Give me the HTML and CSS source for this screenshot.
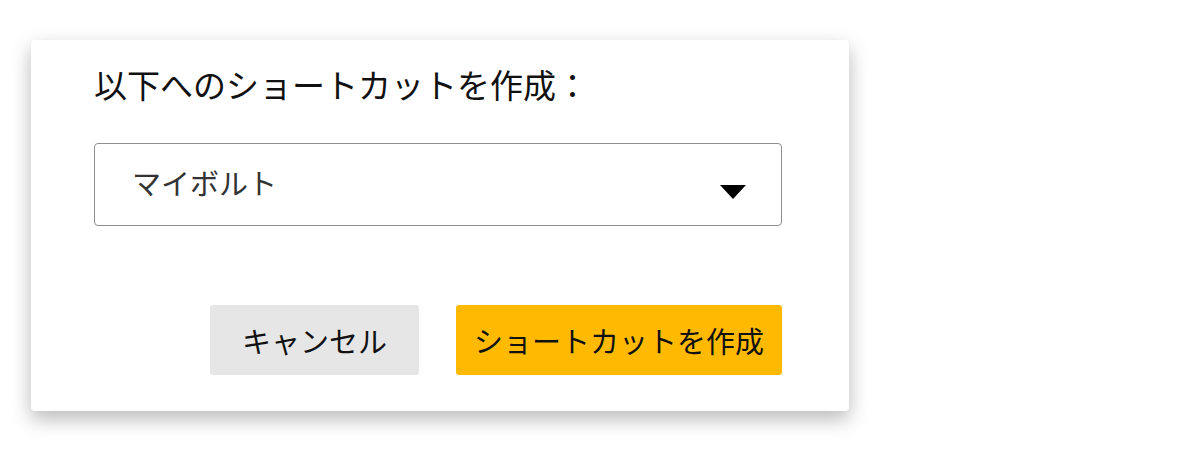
FILE: index.html
```html
<!DOCTYPE html>
<html lang="ja">
<head>
    <meta charset="UTF-8">
    <meta name="viewport" content="width=device-width, initial-scale=1.0">
    <title>ショートカットを作成</title>
    <link rel="stylesheet" href="styles.css">
</head>
<body>

    <div class="dialog">
        <h2 class="dialog-title">以下へのショートカットを作成：</h2>

        <div class="select-box">
            <span class="select-value">マイボルト</span>
            <svg class="select-arrow" width="26" height="14" viewBox="0 0 26 14">
                <path d="M0 0 H26 L13 14 Z" fill="#000"/>
            </svg>
        </div>

        <div class="dialog-actions">
            <button class="btn btn-cancel">キャンセル</button>
            <button class="btn btn-primary">ショートカットを作成</button>
        </div>
    </div>

</body>
</html>
```

FILE: styles.css
```css
/* --- Base --- */
html, body {
    height: 100%;
}

body {
    margin: 0;
    padding: 40px 0 0 31px;
    box-sizing: border-box;
    background: #fff;
    font-family: "Noto Sans CJK JP", "Noto Sans", sans-serif;
    color: #111;
}

/* --- Dialog card --- */
.dialog {
    width: 818px;
    height: 371px;
    box-sizing: border-box;
    padding: 22px 67px 36px 63px;
    background: #fff;
    border-radius: 4px;
    box-shadow: 0 8px 20px rgba(0, 0, 0, 0.28);
    display: flex;
    flex-direction: column;
}

.dialog-title {
    margin: 0;
    font-size: 33px;
    font-weight: 400;
    line-height: 44px;
    color: #111;
}

/* --- Dropdown --- */
.select-box {
    margin-top: 37px;
    height: 83px;
    box-sizing: border-box;
    border: 1px solid #8f8f8f;
    border-radius: 4px;
    display: flex;
    align-items: center;
    justify-content: space-between;
    padding: 0 35px 0 37px;
}

.select-value {
    font-size: 29px;
    color: #333;
    line-height: 1;
    margin-top: -4px;
}

.select-arrow {
    margin-top: 14px;
}

/* --- Buttons --- */
.dialog-actions {
    margin-top: auto;
    display: flex;
    justify-content: flex-end;
    gap: 37px;
}

.btn {
    height: 70px;
    border: none;
    border-radius: 3px;
    font-family: inherit;
    font-size: 29px;
    color: #111;
    cursor: pointer;
    padding: 0;
}

.btn-cancel {
    width: 209px;
    background: #e6e6e6;
}

.btn-primary {
    width: 326px;
    background: #ffba00;
}
```
